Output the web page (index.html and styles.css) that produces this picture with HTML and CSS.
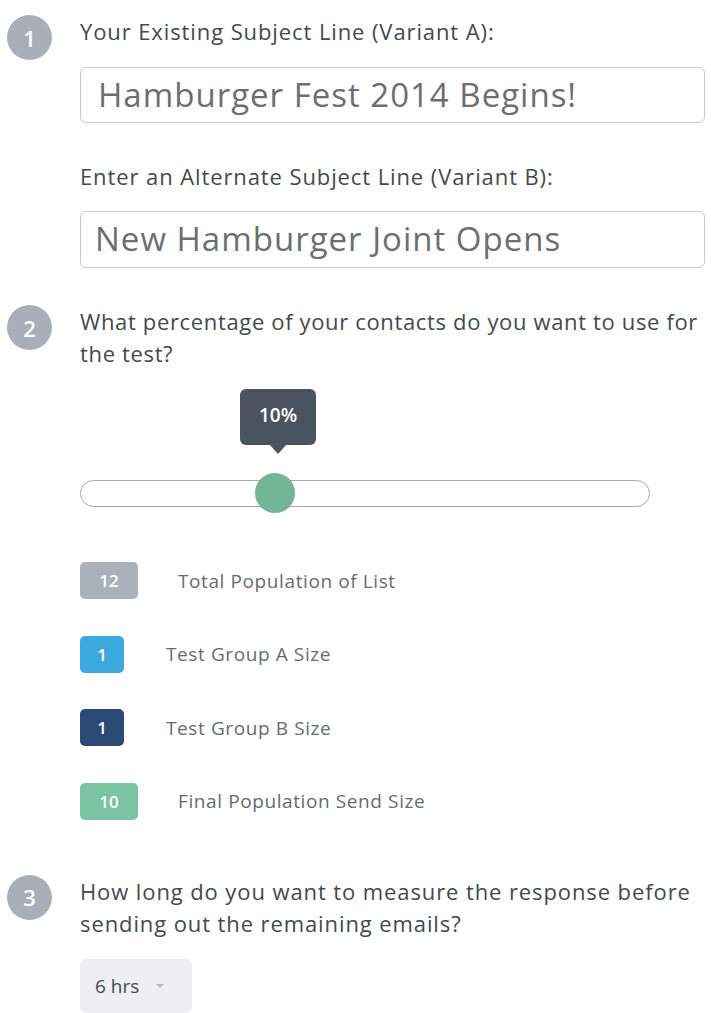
FILE: index.html
```html
<!DOCTYPE html>
<html lang="en">
<head>
    <meta charset="UTF-8">
    <title>A/B Subject Line Test</title>
    <link rel="stylesheet" href="styles.css">
</head>
<body>
    <div class="wizard">
        <!-- Step 1 -->
        <section class="step step-one">
            <div class="step-num"><span>1</span></div>
            <div class="step-body">
                <h3 class="step-title">Your Existing Subject Line (Variant A):</h3>
                <div class="input-field">Hamburger Fest 2014 Begins!</div>

                <h3 class="field-label">Enter an Alternate Subject Line (Variant B):</h3>
                <div class="input-field alt">New Hamburger Joint Opens</div>
            </div>
        </section>

        <!-- Step 2 -->
        <section class="step step-two">
            <div class="step-num"><span>2</span></div>
            <div class="step-body">
                <h3 class="step-title">What percentage of your contacts do you want to use for the test?</h3>

                <div class="slider">
                    <div class="slider-track"></div>
                    <div class="slider-tip" style="left: 34.4%">10%</div>
                    <div class="slider-thumb" style="left: 34.4%"></div>
                </div>

                <ul class="stats">
                    <li><span class="badge wide grey">12</span><span class="stat-label">Total Population of List</span></li>
                    <li><span class="badge blue">1</span><span class="stat-label">Test Group A Size</span></li>
                    <li><span class="badge navy">1</span><span class="stat-label">Test Group B Size</span></li>
                    <li><span class="badge wide green">10</span><span class="stat-label">Final Population Send Size</span></li>
                </ul>
            </div>
        </section>

        <!-- Step 3 -->
        <section class="step step-three">
            <div class="step-num"><span>3</span></div>
            <div class="step-body">
                <h3 class="step-title">How long do you want to measure the response before sending out the remaining emails?</h3>
                <button class="dropdown">6 hrs <span class="caret"></span></button>
            </div>
        </section>
    </div>
</body>
</html>
```

FILE: styles.css
```css
* {
    margin: 0;
    padding: 0;
    box-sizing: border-box;
}

body {
    background: #ffffff;
    font-family: 'Open Sans', sans-serif;
    color: #444a52;
}

.wizard {
    padding: 15px 0 0 7px;
}

/* Steps */
.step {
    display: flex;
}

.step-num {
    width: 73px;
    flex-shrink: 0;
}

.step-num span {
    display: flex;
    align-items: center;
    justify-content: center;
    width: 45px;
    height: 45px;
    border-radius: 50%;
    background: #a9afb9;
    color: #ffffff;
    font-size: 22px;
    font-weight: 600;
}

.step-body {
    flex: 1;
    padding-right: 6px;
}

.step-two .step-body {
    padding-right: 0;
}

.step-title,
.field-label {
    font-size: 22px;
    font-weight: normal;
    line-height: 32px;
    letter-spacing: 0.9px;
    color: #45494f;
}

.step-two .step-title {
    letter-spacing: 0.65px;
}

.field-label {
    margin-top: 37px;
}

/* Inputs */
.input-field {
    height: 56px;
    margin-top: 20px;
    border: 1px solid #c9c9c9;
    border-radius: 6px;
    padding: 0 17px;
    font-size: 33px;
    line-height: 53px;
    letter-spacing: 1px;
    color: #6b6e72;
}

.input-field.alt {
    height: 57px;
    margin-top: 19px;
    padding-left: 14px;
}

.step-two {
    margin-top: 37px;
}

/* Slider */
.slider {
    position: relative;
    height: 140px;
    width: 570px;
}

.slider-track {
    position: absolute;
    left: 0;
    right: 0;
    top: 111px;
    height: 27px;
    border: 1.5px solid #a8a8a8;
    border-radius: 14px;
}

.slider-tip {
    position: absolute;
    top: 20px;
    width: 76px;
    height: 56px;
    margin-left: -36px;
    border-radius: 6px;
    background: #4b5360;
    color: #ffffff;
    font-size: 19px;
    font-weight: 600;
    text-align: center;
    line-height: 52px;
}

.slider-tip::after {
    content: "";
    position: absolute;
    left: 50%;
    bottom: -9px;
    margin-left: -9px;
    border-left: 9px solid transparent;
    border-right: 9px solid transparent;
    border-top: 10px solid #4b5360;
}

.slider-thumb {
    position: absolute;
    top: 104px;
    width: 40px;
    height: 40px;
    margin-left: -21px;
    border-radius: 50%;
    background: #72b597;
}

/* Stats */
.stats {
    list-style: none;
    margin-top: 53px;
}

.stats li {
    display: flex;
    align-items: center;
    height: 37px;
    margin-bottom: 36.5px;
}

.stats li:last-child {
    margin-bottom: 0;
}

.badge {
    display: flex;
    align-items: center;
    justify-content: center;
    width: 44px;
    height: 37px;
    border-radius: 5px;
    color: #ffffff;
    font-size: 17px;
    font-weight: 600;
    margin-right: 42px;
}

.badge.wide {
    width: 58px;
    margin-right: 40px;
}

.badge.grey { background: #aab1bb; }
.badge.blue { background: #3ba8de; }
.badge.navy { background: #2c4a76; }
.badge.green { background: #7bc4a1; }

.stat-label {
    font-size: 19px;
    letter-spacing: 0.6px;
    color: #676b70;
}

/* Step 3 */
.step-three {
    margin-top: 55px;
}

.dropdown {
    margin-top: 20px;
    display: flex;
    align-items: center;
    width: 112px;
    height: 54px;
    padding: 0 15px;
    border: none;
    border-radius: 6px;
    background: #eeeff3;
    font-family: inherit;
    font-size: 19px;
    color: #45494f;
}

.caret {
    margin-left: 17px;
    border-left: 4px solid transparent;
    border-right: 4px solid transparent;
    border-top: 4px solid #b9bcc2;
}
```
